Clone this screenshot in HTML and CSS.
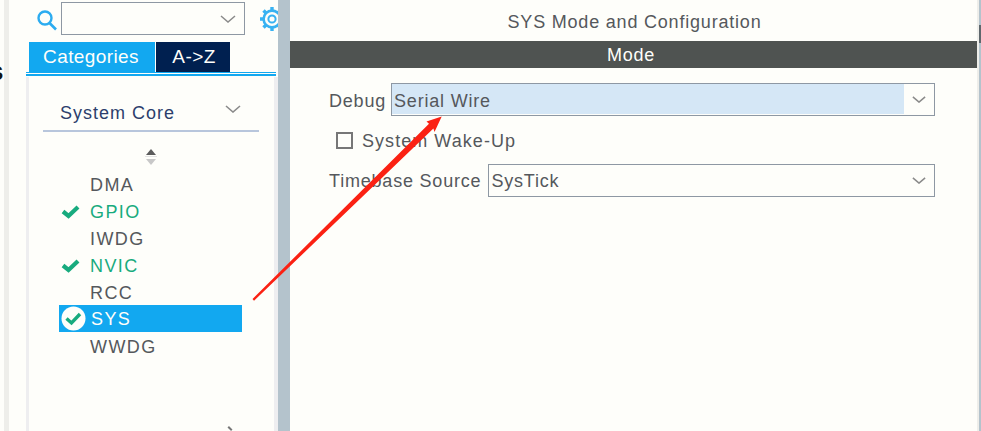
FILE: index.html
```html
<!DOCTYPE html>
<html lang="en">
<head>
  <meta charset="UTF-8">
  <meta name="viewport" content="width=device-width, initial-scale=1.0">
  <title>SYS Mode and Configuration</title>
  <link rel="stylesheet" href="styles.css">
</head>
<body>
<div class="app">
  <div class="gutter"><div class="gutter-line"></div></div>

  <div class="sidebar">
    <div class="search-row">
      <svg class="search-icon" width="22" height="22" viewBox="0 0 22 22">
        <circle cx="9" cy="9" r="6.5" fill="none" stroke="#2cacf0" stroke-width="2.4"/>
        <path d="M13.5 14 L20 20.5" stroke="#2cacf0" stroke-width="2.6" fill="none"/>
      </svg>
      <div class="search-box">
        <svg class="chevron" width="16" height="8" viewBox="0 0 16 8"><path d="M1 1 L8 7 L15 1" fill="none" stroke="#8a8a8a" stroke-width="1.5"/></svg>
      </div>
      <svg class="gear-icon" width="26" height="26" viewBox="0 0 26 26">
        <circle cx="13" cy="13" r="8.4" fill="none" stroke="#38b2f2" stroke-width="2.6"/>
        <circle cx="13" cy="13" r="3.6" fill="none" stroke="#38b2f2" stroke-width="2"/>
        <path d="M13 1 V5 M13 21 V25 M1 13 H5 M21 13 H25 M4.5 4.5 L7.3 7.3 M18.7 18.7 L21.5 21.5 M4.5 21.5 L7.3 18.7 M18.7 7.3 L21.5 4.5" stroke="#38b2f2" stroke-width="3.4"/>
      </svg>
    </div>

    <div class="tabs">
      <div class="tab tab-active">Categories</div>
      <div class="tab tab-dark">A-&gt;Z</div>
    </div>
    <div class="tabs-line"></div>

    <div class="panel">
      <div class="category">
        <span>System Core</span>
        <svg class="category-chevron" width="16" height="8" viewBox="0 0 16 8"><path d="M1 1 L8 7 L15 1" fill="none" stroke="#8a8a8a" stroke-width="1.6"/></svg>
      </div>

      <svg class="sort-icon" width="14" height="17" viewBox="0 0 14 17">
        <path d="M7 0 L12 6 H2 Z" fill="#5c5c5c"/>
        <path d="M1 7 H13 V8 H1 Z" fill="#e4e4e4"/>
        <path d="M2 10 H12 L7 16 Z" fill="#c8c8c8"/>
      </svg>

      <ul class="peripherals">
        <li>DMA</li>
        <li class="is-ok">
          <svg class="check" width="19" height="14" viewBox="0 0 19 14"><path d="M2 6.5 L7.5 11 L17 2" fill="none" stroke="#18ab7e" stroke-width="4.2"/></svg>
          GPIO
        </li>
        <li>IWDG</li>
        <li class="is-ok">
          <svg class="check" width="19" height="14" viewBox="0 0 19 14"><path d="M2 6.5 L7.5 11 L17 2" fill="none" stroke="#18ab7e" stroke-width="4.2"/></svg>
          NVIC
        </li>
        <li>RCC</li>
        <li class="is-selected">
          <svg class="check-badge" width="25" height="25" viewBox="0 0 25 25">
            <circle cx="12.5" cy="12.5" r="12" fill="#fefefa"/>
            <path d="M5.5 12.5 L10.5 17 L19 8" fill="none" stroke="#18ab7e" stroke-width="3.4"/>
          </svg>
          SYS
        </li>
        <li>WWDG</li>
      </ul>
      <div class="resize-mark"></div>
    </div>
  </div>

  <div class="splitter"></div>

  <div class="content">
    <div class="title">SYS Mode and Configuration</div>
    <div class="mode-bar">Mode</div>
    <div class="form">
      <div class="form-row row-debug">
        <label>Debug</label>
        <div class="combo">
          <div class="combo-value is-highlighted">Serial Wire</div>
          <div class="combo-button">
            <svg width="14" height="7" viewBox="0 0 16 8"><path d="M1 1 L8 7 L15 1" fill="none" stroke="#8a8a8a" stroke-width="1.7"/></svg>
          </div>
        </div>
      </div>
      <div class="form-row row-check">
        <div class="checkbox"></div>
        <label>System Wake-Up</label>
      </div>
      <div class="form-row row-timebase">
        <label>Timebase Source</label>
        <div class="combo">
          <div class="combo-value">SysTick</div>
          <div class="combo-button">
            <svg width="14" height="7" viewBox="0 0 16 8"><path d="M1 1 L8 7 L15 1" fill="none" stroke="#8a8a8a" stroke-width="1.7"/></svg>
          </div>
        </div>
      </div>
    </div>
  </div>

  <div class="scrollbar"><div class="scrollbar-thumb"></div></div>
</div>

<div class="cut-letter">s</div>

<!-- annotation drawn over the screenshot -->
<svg class="annotation" width="981" height="431" viewBox="0 0 981 431">
  <path d="M441.7 116.5 L426.5 121.5 L429 123.8 L252.5 299 L254 300.8 L433.4 128.4 L434.5 132 Z" fill="#fb2113"/>
</svg>
</body>
</html>
```

FILE: styles.css
```css
body {
  margin: 0;
  background-color: #fefefa;
  font-family: "Liberation Sans", Arial, sans-serif;
  font-size: 18px;
  letter-spacing: 0.8px;
  color: #55585c;
  overflow: hidden;
}

.app {
  display: flex;
  height: 431px;
  overflow: hidden;
}

.gutter {
  width: 26px;
  padding-left: 4px;
  box-sizing: border-box;
  flex-shrink: 0;
}

.gutter-line {
  width: 5px;
  height: 100%;
  background: #eeeeea;
}

/* sidebar */
.sidebar {
  width: 252px;
  flex-shrink: 0;
  overflow: hidden;
  display: flex;
  flex-direction: column;
}

.search-row {
  display: flex;
  align-items: center;
  height: 33px;
  margin-top: 2px;
  padding-left: 10px;
}

.search-icon {
  flex-shrink: 0;
  margin: 3px 3px 0 0;
}

.search-box {
  width: 174px;
  height: 31px;
  flex-shrink: 0;
  border: 1px solid #8e98a3;
  display: flex;
  align-items: center;
  justify-content: flex-end;
  padding-right: 8px;
}

.gear-icon {
  flex-shrink: 0;
  margin-left: 14px;
}

.tabs {
  display: flex;
  gap: 1px;
  margin-top: 7px;
  padding-left: 3px;
  height: 30px;
}

.tab {
  display: flex;
  align-items: center;
  justify-content: center;
  box-sizing: border-box;
  color: #fefefa;
  font-size: 19px;
  letter-spacing: 0.4px;
}

.tab-active {
  width: 126px;
  padding-right: 2px;
  background: #12a8f0;
}

.tab-dark {
  width: 74px;
  padding-left: 2px;
  background: #002050;
}

.tabs-line {
  width: 250px;
  height: 4px;
  background: linear-gradient(#12a8f0 1px, #fefefa 1px, #fefefa 2px, #12a8f0 2px);
  margin-bottom: 1px;
}

.panel {
  flex: 1;
  border-left: 3px solid #eeeef0;
  border-right: 4px solid #eeeef0;
  display: flex;
  flex-direction: column;
  position: relative;
}

.category {
  margin: 20px 15px 0 14px;
  height: 33px;
  border-bottom: 2px solid #b8c6dc;
  display: flex;
  justify-content: space-between;
  padding: 0 18px 0 17px;
  color: #2c3e6c;
}

.category span {
  padding-top: 6px;
  letter-spacing: 1px;
}

.category-chevron {
  margin-top: 8px;
}

.sort-icon {
  align-self: flex-start;
  margin: 17px 0 0 115px;
}

.peripherals {
  list-style: none;
  margin: 5px 0 0 30px;
  padding: 0;
  width: 183px;
  letter-spacing: 1.4px;
}

.peripherals li {
  height: 27px;
  line-height: 29px;
  padding-left: 31px;
  position: relative;
}

.peripherals .is-ok {
  color: #18ab7e;
}

.peripherals .is-selected {
  background: #12a8f0;
  color: #fefefa;
  padding-left: 32px;
  margin: -1px 0 1px;
}

.check {
  position: absolute;
  left: 2px;
  top: 7px;
}

.check-badge {
  position: absolute;
  left: 2px;
  top: 1px;
}

.resize-mark {
  position: absolute;
  left: 200px;
  bottom: 0;
  width: 2px;
  height: 5px;
  background: #777;
  transform: rotate(-45deg);
}

/* splitter */
.splitter {
  width: 12px;
  flex-shrink: 0;
  background: #b4c3cc;
}

/* main area */
.content {
  width: 687px;
  flex-shrink: 0;
}

.title {
  height: 41px;
  line-height: 44px;
  padding-left: 2px;
  text-align: center;
}

.mode-bar {
  height: 27px;
  line-height: 28px;
  padding-right: 5px;
  background: #4f5351;
  color: #fefefa;
  text-align: center;
}

.form {
  padding: 15px 42px 0 39px;
}

.form-row {
  display: flex;
  align-items: center;
}

.form-row label {
  white-space: nowrap;
  padding-top: 2px;
}

.row-debug label {
  margin-right: 5px;
  padding-top: 4px;
}

.row-timebase label {
  margin-right: 7px;
}

.row-check {
  height: 33px;
  margin-top: 8px;
  margin-bottom: 7px;
  padding-left: 7px;
}

.row-check label {
  letter-spacing: 1.05px;
}

.checkbox {
  width: 13px;
  height: 13px;
  border: 2px solid #777;
  margin-right: 9px;
  flex-shrink: 0;
}

.combo {
  flex: 1;
  height: 31px;
  border: 1px solid #8e98a3;
  display: flex;
}

.combo-value {
  flex: 1;
  padding-left: 2px;
  line-height: 33px;
}

.combo-value.is-highlighted {
  background: #d5e7f6;
  margin-bottom: 1px;
  line-height: 35px;
}

.combo-button {
  width: 30px;
  display: flex;
  align-items: center;
  justify-content: center;
}

.scrollbar {
  width: 2px;
  flex-shrink: 0;
  background: #b4c3cc;
  border-left: 2px solid #eeeeea;
}

.scrollbar-thumb {
  height: 18px;
  margin-top: 25px;
  background: #5e676c;
}

/* overlays */
.cut-letter {
  position: absolute;
  left: -11px;
  top: 56px;
  color: #111;
  font-size: 26px;
  line-height: 30px;
  font-weight: bold;
  letter-spacing: 0;
}

.annotation {
  position: absolute;
  left: 0;
  top: 0;
  pointer-events: none;
}
```
